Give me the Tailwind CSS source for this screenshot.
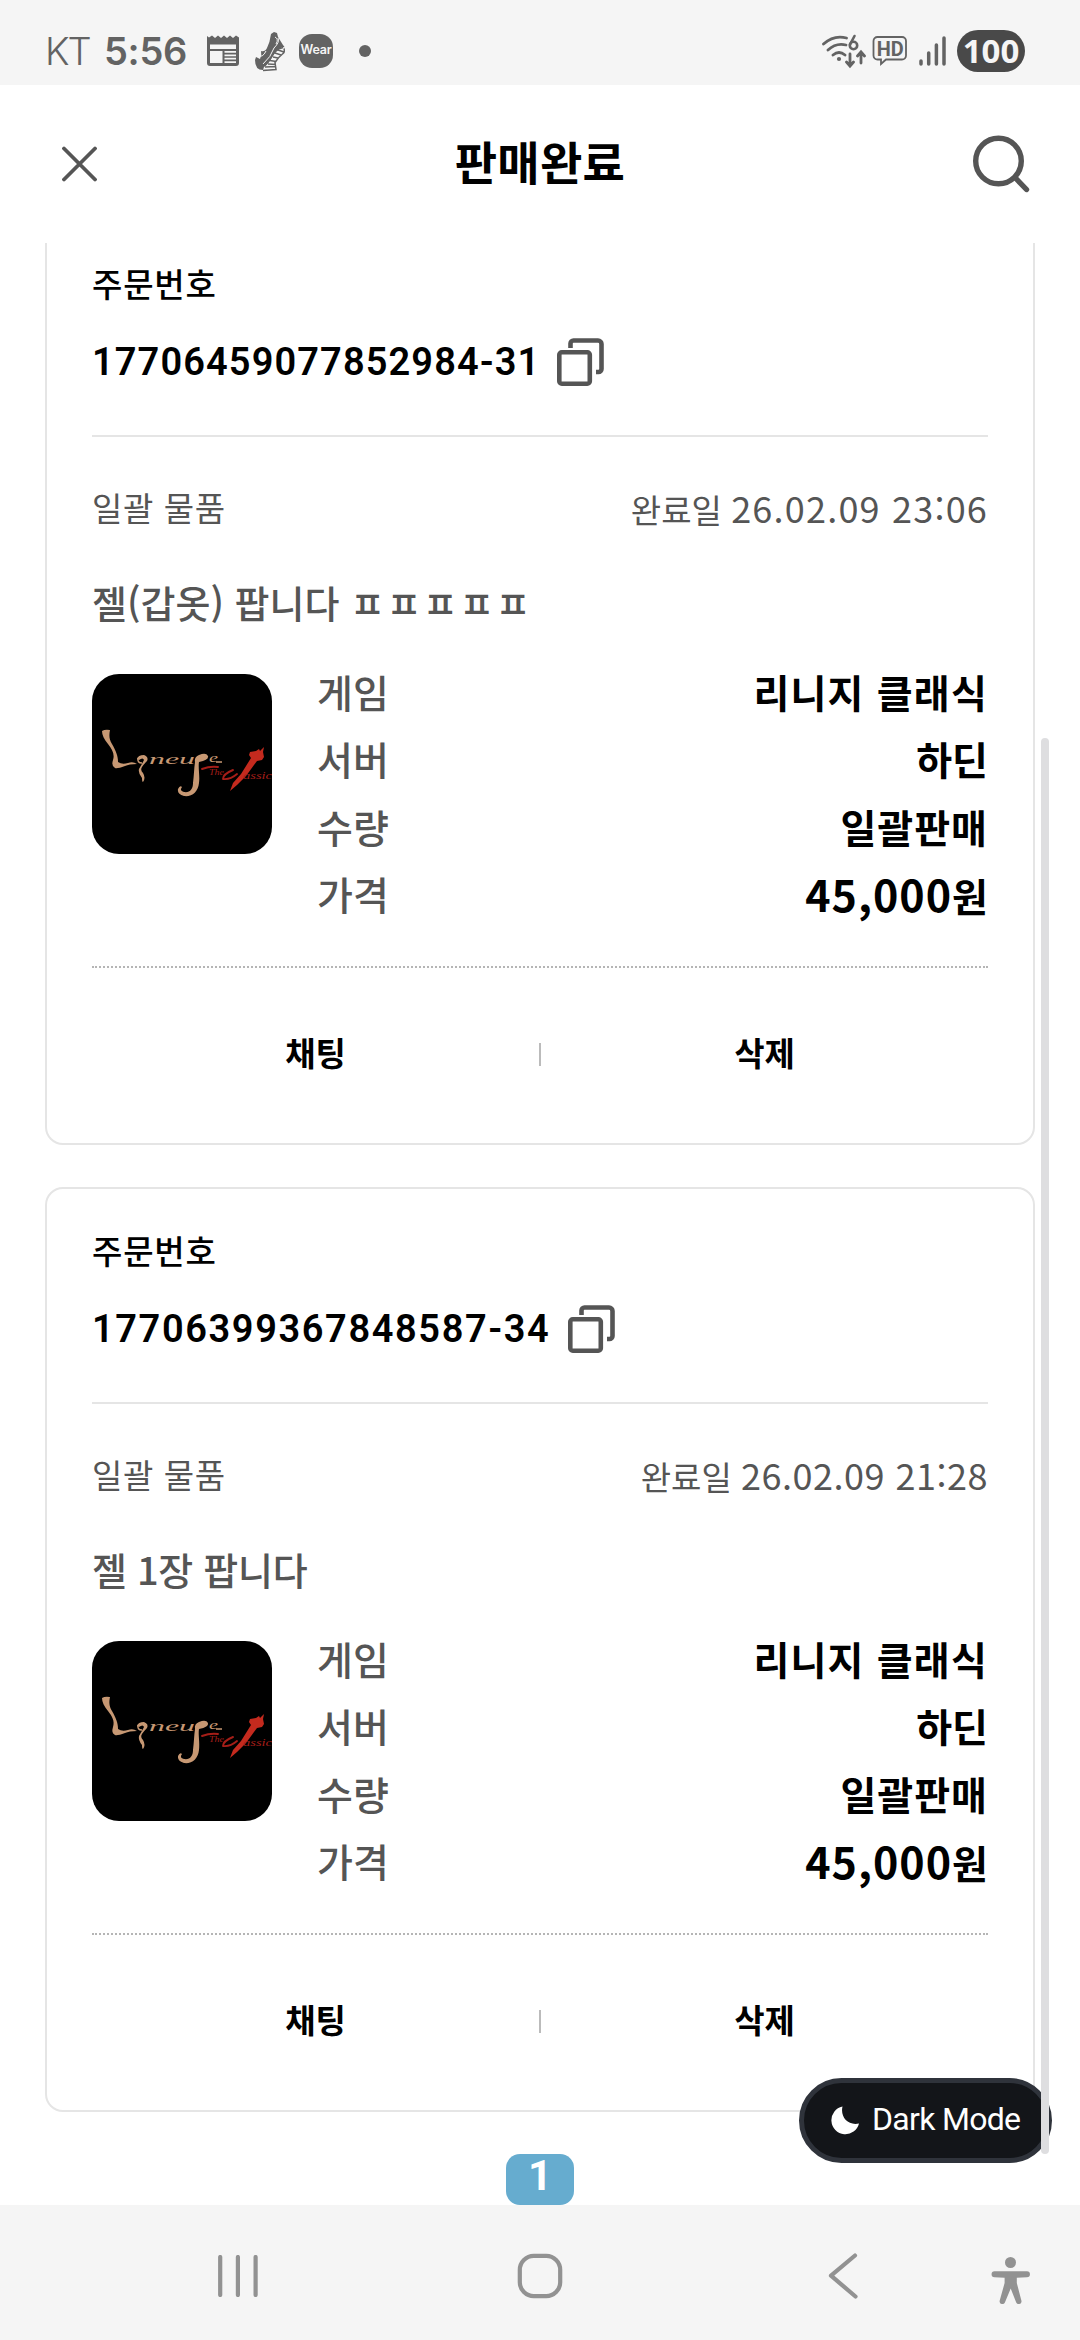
<!DOCTYPE html>
<html lang="ko">
<head>
<meta charset="utf-8">
<meta name="viewport" content="width=device-width">
<title>판매완료</title>
<script src="https://cdn.jsdelivr.net/npm/@tailwindcss/browser@4"></script>
</head>
<body class="bg-white">
<svg class="hidden">
  <symbol id="copy" viewBox="0 0 47 48">
    <path d="M13.500 10V5.500a3 3 0 0 1 3-3H41a3.500 3.500 0 0 1 3.500 3.500V31a3 3 0 0 1-3 3H39" fill="none" stroke="#555" stroke-width="4.600"/>
    <rect x="2.300" y="14.300" width="30.500" height="31.400" rx="2.500" fill="none" stroke="#555" stroke-width="4.600"/>
  </symbol>
  <symbol id="art" viewBox="0 0 180 180">
    <rect width="180" height="180" fill="#000"/>
    <g fill="#c79873">
      <path d="M10 57q3-2 8-1c-1 5-1 9 2 14c4 7 6 12 6 18q4 3 10 1q5-2 9 1q-8 0-12 2q-8 3-10 2q-4-2-2-8c2-6-1-11-5-16c-4-5-6-9-6-13z"/>
      <path d="M103 88q-1-5 4-7q7-3 9 1q1 4-9 6c-1 5 1 14 0 21c-1 9-7 14-15 13q-7-2-6-7q2-4 4-2q-3 4 2 5c6 1 9-3 9-9c1-8 1-14 2-21z"/>
      <path d="M45 85q1-4 7-4q5 2 3 6q-3 3-5 6q-2 3 1 6q3 5 0 9q-1 0-1-4q-4-5-3-9q3-5 5-9q-1-3-5 0z"/>
    </g>
    <path d="M46 84q-1 5 4 5M124 88h6" fill="none" stroke="#c79873" stroke-width="1.500"/>
    <text x="57" y="90" textLength="46" lengthAdjust="spacingAndGlyphs" font-family="Liberation Serif, serif" font-style="italic" font-size="15" fill="#c79873">neu</text>
    <text x="117" y="88" textLength="9" lengthAdjust="spacingAndGlyphs" font-family="Liberation Serif, serif" font-style="italic" font-size="13" fill="#c79873">e</text>
    <path d="M159 84l-2-3 1-3 6-1 3-2 1 2 4-4-1 5 1 5-2 3-5 1-3 4-8 11-9 9-7 6 3-8 8-9z" fill="#c42a1e"/>
    <path d="M110 95q8-3 16-2M131 105q0-5 10-9M131 105q7 1 14-5" fill="none" stroke="#a51e18" stroke-width="1.900" stroke-linecap="round"/>
    <text x="117" y="101" textLength="15" lengthAdjust="spacingAndGlyphs" font-family="Liberation Serif, serif" font-style="italic" font-size="9" fill="#a51e18">The</text>
    <text x="151" y="105" textLength="29" lengthAdjust="spacingAndGlyphs" font-family="Liberation Serif, serif" font-style="italic" font-size="11" fill="#a51e18">assic</text>
  </symbol>
</svg>

<div class="relative flex h-[2340px] w-[1080px] flex-col overflow-hidden bg-white font-['Noto_Sans_CJK_KR',sans-serif] text-black">

  <!-- status bar -->
  <div class="z-10 flex h-[85px] shrink-0 items-center bg-[#f5f5f5] pl-[45px] pr-[55px] pb-[1px] pt-[17px] text-[#636363]">
    <div class="w-[59px] font-[Inter,sans-serif] text-[38px] font-light leading-none tracking-[-2px]">KT</div>
    <div class="w-[102px] font-[Inter,sans-serif] text-[38px] font-semibold leading-none tracking-[-0.3px]">5:56</div>
    <svg class="h-[40px] w-[34px]" viewBox="0 0 34 40"><path d="M1 5l2 1.500 3-2 3 2.500 3-2.500 3 2.500 3-2.500 3 2.500 3-2.500 3 2.500 3-2.500 3 2V32a3 3 0 0 1-3 3H4a3 3 0 0 1-3-3z" fill="#636363"/><path d="M4 13.500h26v4.500H4zM4 20h12.500v12H4zM18.500 20H30v1.800H18.500zM18.500 23.400H30v1.800H18.500zM18.500 26.800H30v1.800H18.500zM18.500 30.200H30v1.700H18.500z" fill="#f5f5f5"/></svg>
    <svg class="ml-[14px] h-[42px] w-[32px]" viewBox="0 0 32 42"><path d="M17 4l3-2 3 1 1 4 5 8q3 3 1 7-5 3-9 9-5 9-12 9Q1 40 1 30l1-3 4 2q2-4 1-8 4 1 6-3 3-6 4-14z" fill="#636363"/><path d="M31 17q-7 0-12 9-5 9-9 11l-1 3 12-1 1-7 8-9z" fill="#f5f5f5"/><path d="M29 17.500q-8 2-12 10-4 7-8 8M30 18.500q1 4-1 5-5 4-8 9l1 7-13 1M24 20l6 2M21 23l6 2M19 27l5 1M16 30.500l6 1M14 34l8 .5M11 37l11-.5" fill="none" stroke="#636363" stroke-width="1.500"/><path d="M21 7q4 2 1 7M24 8q2 4-4 10-3 9-11 16M3 26q6 2 9-5" fill="none" stroke="#f5f5f5" stroke-width="1"/></svg>
    <div class="ml-[13px] flex h-[34px] w-[34px] items-center justify-center rounded-[13px] bg-[#636363] font-[Inter,sans-serif] text-[12.500px] font-semibold leading-none tracking-[-0.200px] text-[#f5f5f5]">Wear</div>
    <div class="ml-[26px] h-[12px] w-[12px] rounded-full bg-[#636363]"></div>
    <div class="ml-auto flex items-center">
      <svg class="h-[36px] w-[44px]" viewBox="0 0 44 36"><g fill="none" stroke="#636363" stroke-width="2.800" stroke-linecap="round"><path d="M1.500 11Q12 1.500 24.500 5M6 17q8-7.500 18-5M11 22q6-5 12 0"/><path d="M28 21v11M24.500 29l3.500 4 3.500-4M39 30V19.500M35.500 23l3.500-4 3.500 4"/><circle cx="31.500" cy="12.500" r="3.700" stroke-width="2.600"/><path d="M28 11.500l4.500-8.500" stroke-width="2.600"/></g><circle cx="17" cy="26" r="2.100" fill="#636363"/></svg>
      <svg class="ml-[6px] mt-[1px] h-[32px] w-[36px]" viewBox="0 0 36 32"><path d="M5.500 2h24.500a4 4 0 0 1 4 4v14.500a4 4 0 0 1-4 4H14l-5 4.500v-4.500H5.500a4 4 0 0 1-4-4V6a4 4 0 0 1 4-4z" fill="none" stroke="#636363" stroke-width="1.800"/><text x="4.800" y="20.500" textLength="27" lengthAdjust="spacingAndGlyphs" font-family="Roboto, sans-serif" font-weight="700" font-size="20" fill="#636363">HD</text></svg>
      <svg class="ml-[11px] h-[30px] w-[28px]" viewBox="0 0 28 30"><path d="M2 25v3M9.700 17v11M17.400 9v19M25 2v26" stroke="#636363" stroke-width="3.500" stroke-linecap="round"/></svg>
      <div class="ml-[10px] flex h-[42px] w-[68px] items-center justify-center rounded-full bg-[#494949] font-['Open_Sans',sans-serif] text-[33px] font-bold leading-none text-[#f5f5f5]">100</div>
    </div>
  </div>

  <!-- title bar -->
  <header class="z-10 flex h-[158px] shrink-0 items-center justify-between bg-white pl-[62px] pr-[50px]">
    <svg class="h-[36px] w-[35px]" viewBox="0 0 35 36"><path d="M2 2.500l31 31M33 2.500l-31 31" stroke="#555" stroke-width="3.800" stroke-linecap="round"/></svg>
    <h1 class="-mt-[9px] pl-[11px] text-[46px] font-bold leading-none tracking-[0.300px]">판매완료</h1>
    <svg class="h-[58px] w-[58px]" viewBox="0 0 58 58"><circle cx="26.500" cy="26" r="22.800" fill="none" stroke="#555" stroke-width="5.400"/><path d="M43.500 43l11 11.500" stroke="#555" stroke-width="5.400" stroke-linecap="round"/></svg>
  </header>

  <!-- order list -->
  <main class="-mt-[23px] flex min-h-0 flex-1 flex-col gap-[42px] px-[45px]">
    <section class="flex h-[925px] shrink-0 flex-col rounded-[18px] border-2 border-[#e5e5e5] px-[45px] pt-[38px]">
      <div class="h-[50px] text-[33px] font-medium leading-[46px] tracking-[0.800px]">주문번호</div>
      <div class="mt-[17px] flex h-[70px] items-center gap-[22px]">
        <span class="w-[443px] whitespace-nowrap font-[Roboto,sans-serif] text-[38px] font-semibold leading-[68px] tracking-[1.100px]">17706459077852984-31</span>
        <svg class="h-[48px] w-[47px]"><use href="#copy"/></svg>
      </div>
      <div class="mt-[38px] h-[2px] shrink-0 bg-[#e5e5e5]"></div>
      <div class="mt-[47px] flex h-[50px] justify-between text-[33px] leading-[47px] text-[#555]"><span class="tracking-[0.600px]">일괄 물품</span><span>완료일 <span class="text-[36px] tracking-[1.200px]">26.02.09 23:06</span></span></div>
      <div class="mt-[44px] h-[54px] whitespace-nowrap text-[38px] font-medium leading-[48px] text-[#555]">젤(갑옷) 팝니다 <span class="tracking-[1.400px]">ㅍㅍㅍㅍㅍ</span></div>
      <div class="mt-[27px] flex h-[270px] items-start">
        <svg class="mt-[15px] h-[180px] w-[180px] rounded-[27px]"><use href="#art"/></svg>
        <dl class="ml-[45px] grid flex-1 grid-cols-[80px_1fr] text-[39px] font-medium leading-[64px] text-[#555] [&>*]:h-[67.400px]">
          <dt>게임</dt><dd class="text-right font-bold tracking-[1.200px] text-black">리니지 클래식</dd>
          <dt>서버</dt><dd class="text-right font-bold text-black">하딘</dd>
          <dt>수량</dt><dd class="text-right font-bold tracking-[1px] text-black">일괄판매</dd>
          <dt>가격</dt><dd class="text-right font-bold text-black"><span class="text-[43px] tracking-[1px]">45,000</span>원</dd>
        </dl>
      </div>
      <div class="mt-[37px] border-t-2 border-dotted border-[#b5b5b5]"></div>
      <div class="mt-[56px] flex h-[60px] items-center text-center text-[33px] font-bold leading-[60px]">
        <span class="-mt-[4px] flex-1">채팅</span><i class="h-[23px] w-[2px] bg-[#bbb]"></i><span class="-mt-[4px] flex-1">삭제</span>
      </div>
    </section>

    <section class="flex h-[925px] shrink-0 flex-col rounded-[18px] border-2 border-[#e5e5e5] px-[45px] pt-[38px]">
      <div class="h-[50px] text-[33px] font-medium leading-[46px] tracking-[0.800px]">주문번호</div>
      <div class="mt-[17px] flex h-[70px] items-center gap-[22px]">
        <span class="w-[454px] whitespace-nowrap font-[Roboto,sans-serif] text-[38px] font-semibold leading-[68px] tracking-[1.600px]">17706399367848587-34</span>
        <svg class="h-[48px] w-[47px]"><use href="#copy"/></svg>
      </div>
      <div class="mt-[38px] h-[2px] shrink-0 bg-[#e5e5e5]"></div>
      <div class="mt-[47px] flex h-[50px] justify-between text-[33px] leading-[47px] text-[#555]"><span class="tracking-[0.600px]">일괄 물품</span><span>완료일 <span class="text-[36px] tracking-[0.500px]">26.02.09 21:28</span></span></div>
      <div class="mt-[44px] h-[54px] whitespace-nowrap text-[38px] font-medium leading-[48px] tracking-[-0.300px] text-[#555]">젤 1장 팝니다</div>
      <div class="mt-[27px] flex h-[270px] items-start">
        <svg class="mt-[15px] h-[180px] w-[180px] rounded-[27px]"><use href="#art"/></svg>
        <dl class="ml-[45px] grid flex-1 grid-cols-[80px_1fr] text-[39px] font-medium leading-[64px] text-[#555] [&>*]:h-[67.400px]">
          <dt>게임</dt><dd class="text-right font-bold tracking-[1.200px] text-black">리니지 클래식</dd>
          <dt>서버</dt><dd class="text-right font-bold text-black">하딘</dd>
          <dt>수량</dt><dd class="text-right font-bold tracking-[1px] text-black">일괄판매</dd>
          <dt>가격</dt><dd class="text-right font-bold text-black"><span class="text-[43px] tracking-[1px]">45,000</span>원</dd>
        </dl>
      </div>
      <div class="mt-[37px] border-t-2 border-dotted border-[#b5b5b5]"></div>
      <div class="mt-[56px] flex h-[60px] items-center text-center text-[33px] font-bold leading-[60px]">
        <span class="-mt-[4px] flex-1">채팅</span><i class="h-[23px] w-[2px] bg-[#bbb]"></i><span class="-mt-[4px] flex-1">삭제</span>
      </div>
    </section>

    <div class="flex h-[51px] w-[68px] shrink-0 justify-center self-center rounded-[14px] bg-[#66accf] font-[Roboto,sans-serif] text-[42px] font-bold leading-[44px] text-white">1</div>
  </main>

  <!-- floating controls -->
  <button class="absolute left-[799px] top-[2078px] flex h-[85px] w-[253px] items-center gap-[13px] rounded-full border-[5px] border-[#2f333b] bg-[#131519] pl-[27px] text-white">
    <svg class="h-[29px] w-[28px] shrink-0" viewBox="0 0 28 29"><path d="M11.500.5A14 14 0 1 0 28 17.500C17 20 9 11 11.500.5z" fill="#fff"/></svg>
    <span class="-mt-[3px] whitespace-nowrap font-[Roboto,sans-serif] text-[32px] leading-none tracking-[-0.700px]">Dark Mode</span>
  </button>
  <div class="absolute left-[1041px] top-[738px] h-[1416px] w-[8px] rounded-full bg-[#dedee0]"></div>

  <!-- navigation bar -->
  <nav class="z-10 flex h-[135px] shrink-0 items-start bg-[#f5f5f5] pt-[48px]">
    <svg class="ml-[218px] mt-[2px] h-[42px] w-[40px]" viewBox="0 0 40 42"><path d="M2.200 2v38M19.900 2v38M37.600 2v38" stroke="#929292" stroke-width="4.200" stroke-linecap="round"/></svg>
    <svg class="ml-[259px] h-[46px] w-[46px]" viewBox="0 0 46 46"><rect x="2.800" y="2.800" width="40.400" height="40.400" rx="14" fill="none" stroke="#929292" stroke-width="4.200"/></svg>
    <svg class="ml-[265px] h-[46px] w-[30px]" viewBox="0 0 30 46"><path d="M27 2.500L3 22.700 27.500 43.500" fill="none" stroke="#929292" stroke-width="4.200" stroke-linecap="round" stroke-linejoin="round"/></svg>
    <svg class="ml-[133px] mt-[4px] h-[48px] w-[40px]" viewBox="0 0 40 48"><circle cx="19.500" cy="5.500" r="5.500" fill="#929292"/><path d="M3.500 14.300h32.500a2.900 2.900 0 0 1 0 5.900l-10.200.6v5.200l4.700 18a2.800 2.800 0 0 1-5.300 1.500L19.700 31.500l-5.800 14a2.800 2.800 0 0 1-5.300-1.500l5-18v-5.200l-10.100-.6a2.900 2.900 0 0 1 0-5.900z" fill="#929292"/></svg>
  </nav>
</div>
</body>
</html>
